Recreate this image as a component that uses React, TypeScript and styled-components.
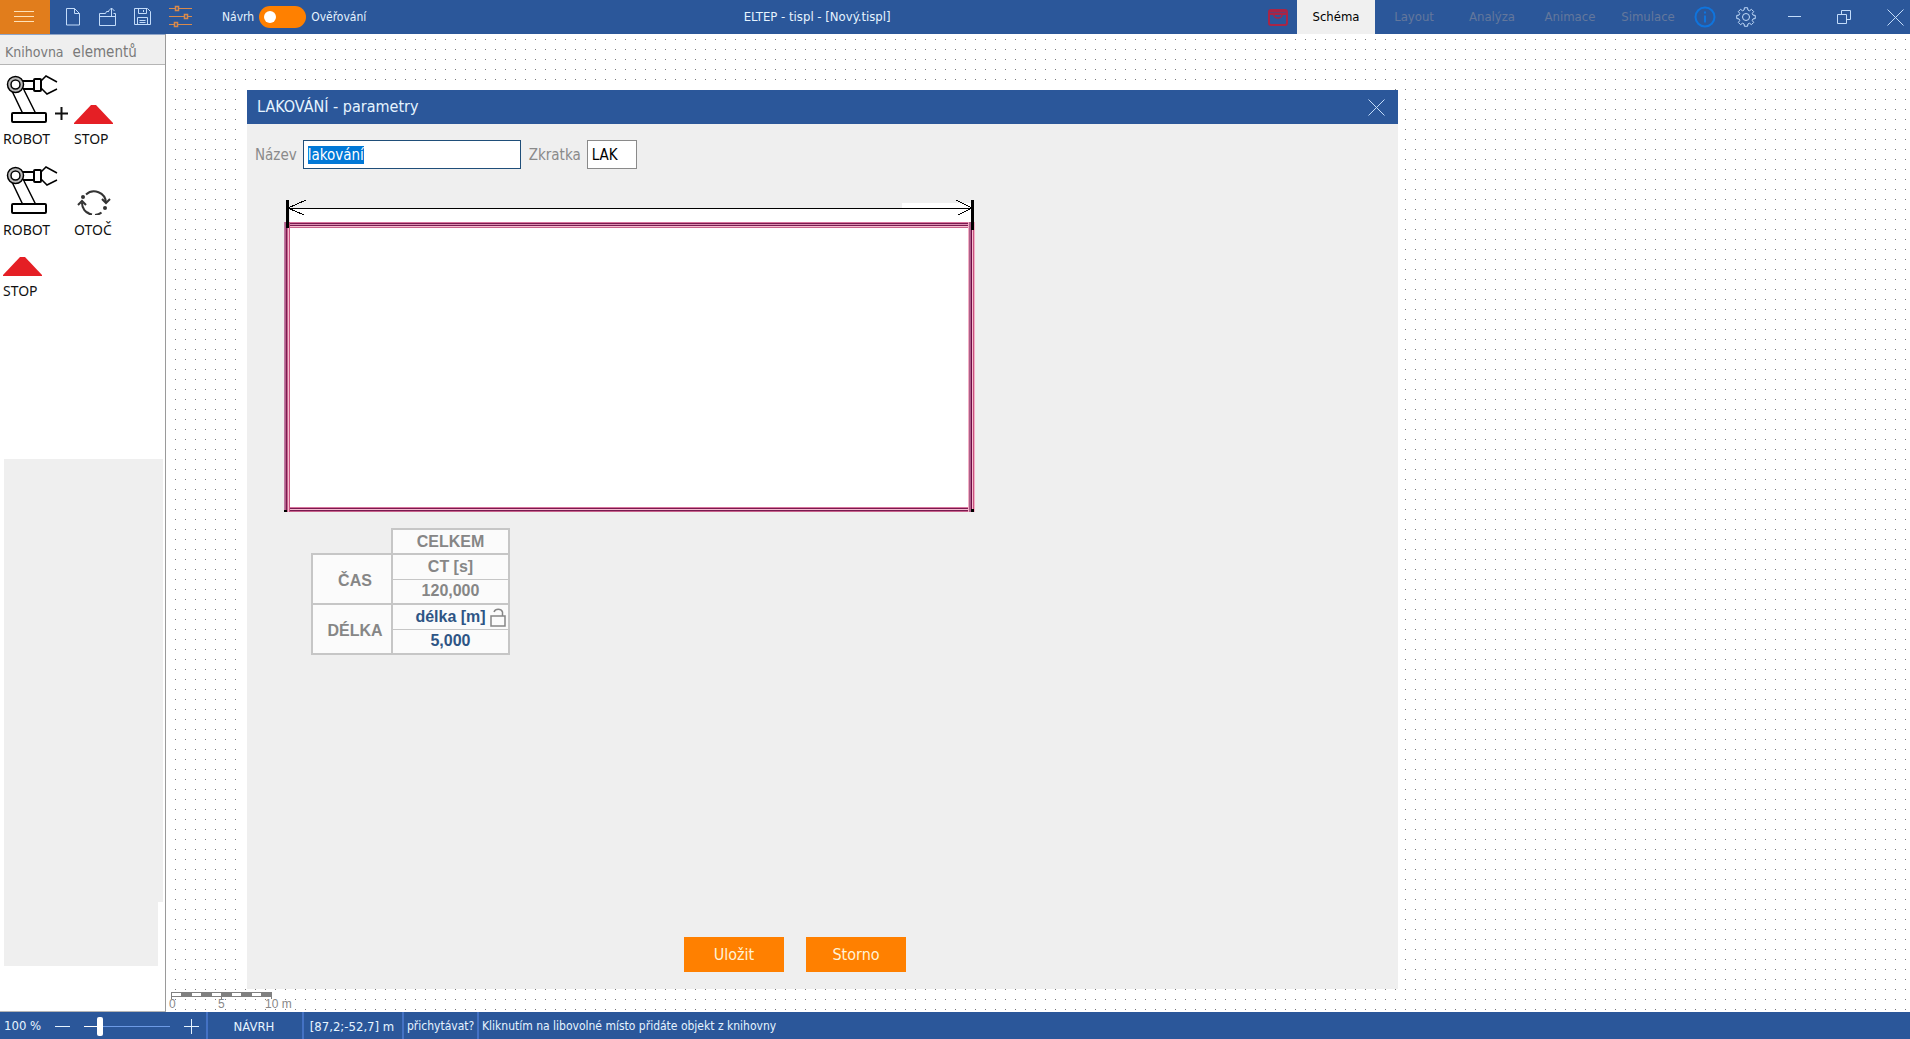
import React, { useEffect, useRef, useState } from 'react';
import styled, { createGlobalStyle, css } from 'styled-components';

const color = {
  bar: '#2b579a',
  barText: '#e6f4ff',
  divider: '#4472c4',
  orange: '#ff8000',
  panel: '#efefef',
  muted: '#8a8a8a',
  tableLine: '#c6c6c6',
};

const uiFont = '"DejaVu Sans Condensed", "DejaVu Sans", sans-serif';
const labelFont = '"Noto Sans", sans-serif';

const GlobalStyle = createGlobalStyle`
  *, *::before, *::after { box-sizing: border-box; }
  body { margin: 0; background: #fff; font: 13px/20px ${uiFont}; overflow: hidden; }
  button { border: 0; padding: 0; background: none; font: inherit; color: inherit; cursor: pointer; }
  svg { display: block; }
`;

const Page = styled.div`
  display: flex;
  flex-direction: column;
  height: 100vh;
`;

/* ---------- title bar ---------- */

const TitleBar = styled.header`
  display: grid;
  grid-template-columns: auto 1fr auto;
  height: 34px;
  flex: none;
  background: ${color.bar};
  color: ${color.barText};
`;

const BarGroup = styled.div`
  display: flex;
  align-items: center;
`;

const MenuButton = styled.button`
  display: grid;
  place-items: center;
  width: 50px;
  height: 34px;
  padding-right: 2px;
  background: #e17d1c;
`;

const IconRow = styled.div<{ $gap: number }>`
  display: flex;
  align-items: center;
  gap: ${(p) => p.$gap}px;
`;

const ToolButtons = styled(IconRow)`
  padding-left: 15px;
`;

const ModeSwitch = styled.label`
  display: flex;
  align-items: center;
  gap: 5px;
  margin-left: 29px;
  font-size: 12px;
`;

const Toggle = styled.input`
  appearance: none;
  display: flex;
  align-items: center;
  width: 47px;
  height: 22px;
  margin: 0;
  padding: 0 5px;
  border-radius: 11px;
  background: ${color.orange};
  &::before {
    content: '';
    width: 12px;
    height: 12px;
    border-radius: 50%;
    background: #fff;
  }
  &:checked { justify-content: flex-end; }
`;

const AppTitle = styled.h1`
  margin: 0;
  font-size: 13px;
  font-weight: normal;
  line-height: 34px;
  text-align: center;
`;

const Tab = styled.button<{ $active?: boolean }>`
  width: 78px;
  height: 34px;
  color: #64779c;
  ${(p) => p.$active && css`
    background: #f0f0f0;
    color: #000;
  `}
`;

const TabList = styled.nav`
  display: flex;
  margin: 0 7px 0 9px;
`;

const WindowControls = styled(IconRow)`
  padding: 0 6px 0 32px;
`;

/* ---------- sidebar ---------- */

const Workspace = styled.div`
  display: flex;
  flex: 1;
  min-height: 0;
`;

const Sidebar = styled.aside`
  display: flex;
  flex-direction: column;
  width: 166px;
  flex: none;
  border-right: 1px solid #9a9a9a;
  border-bottom: 1px solid #b5b5b5;
`;

const SidebarTitle = styled.h2`
  display: flex;
  gap: 9px;
  height: 31px;
  margin: 0;
  padding-left: 5px;
  border-top: 1px solid #8fa5c8;
  border-bottom: 1px solid #b5b5b5;
  background: ${color.panel};
  color: #7a7a7a;
  font-size: 15px;
  font-weight: normal;
  line-height: 34px;
`;

const SidebarTitleLead = styled.span`
  font-size: 14px;
`;

const ElementList = styled.div`
  display: grid;
  grid-template-columns: 52px 19px 1fr;
  row-gap: 17px;
  padding: 10px 0 0 3px;
  color: #111;
  font: 14px/20px ${labelFont};
`;

const ElementButton = styled.button<{ $column?: number }>`
  display: flex;
  flex-direction: column;
  justify-content: flex-end;
  justify-self: start;
  align-items: flex-start;
  gap: 5px;
  grid-column: ${(p) => p.$column ?? 1};
`;

const Plus = styled.span`
  display: grid;
  justify-items: start;
  align-items: center;
  padding-top: 3px;
`;

const Filler = styled.div`
  flex: 1;
  margin: 158px 2px 0 4px;
  background: ${color.panel};
`;

const FillerFoot = styled.div`
  height: 64px;
  margin: 0 7px 45px 4px;
  background: ${color.panel};
`;

/* ---------- canvas and dialog ---------- */

const Canvas = styled.main`
  display: flex;
  flex: 1;
  flex-direction: column;
  min-width: 0;
  padding-top: 56px;
  background: conic-gradient(at 1px 1px, transparent 270deg, #7c7c7c 270deg) 9px 5px / 10px 10px;
`;

const Dialog = styled.section`
  display: flex;
  flex: 1;
  flex-direction: column;
  width: 66%;
  margin-left: 81px;
  background: ${color.panel};
  box-shadow: -3px -3px 0 #fff;
`;

const DialogHeader = styled.header`
  display: flex;
  align-items: center;
  justify-content: space-between;
  height: 34px;
  padding: 0 13px 0 10px;
  background: ${color.bar};
  color: ${color.barText};
`;

const DialogTitle = styled.h2`
  margin: 0;
  font-size: 16px;
  font-weight: normal;
`;

const FormRow = styled.form`
  display: flex;
  align-items: center;
  gap: 8px;
  padding: 16px 8px 0;
  color: ${color.muted};
  font-size: 15px;
`;

const Field = styled.label`
  display: flex;
  align-items: center;
  gap: 6px;
`;

const TextField = styled.input<{ $width: number; $strong?: boolean }>`
  width: ${(p) => p.$width}px;
  height: 29px;
  padding: 0 4px;
  border: 1px solid ${(p) => (p.$strong ? '#1f4e79' : '#8a8a8a')};
  border-radius: 0;
  outline: none;
  background: #fff;
  color: #000;
  font: 15px/20px ${uiFont};
  &::selection { background: #0078d7; color: #fff; }
`;

const Drawing = styled.figure`
  margin: 27px 0 0 33px;
`;

const Table = styled.table`
  margin: 12px 0 0 64px;
  align-self: flex-start;
  border-collapse: collapse;
  color: #868686;
  font: bold 16px/20px "Liberation Sans", Arial, sans-serif;
  text-align: center;
`;

const Cell = styled.td<{ $thin?: boolean; $blue?: boolean }>`
  position: relative;
  width: 117px;
  height: 25px;
  padding: 0;
  border: 2px solid ${color.tableLine};
  background: #fbfbfb;
  color: ${(p) => (p.$blue ? '#2e5585' : 'inherit')};
  ${(p) => p.$thin && css`border-bottom-width: 1px;`}
`;

const ValueCell = styled(Cell)`
  border-top-width: 1px;
`;

const HeadCell = styled(Cell)`
  width: 80px;
  padding: 3px 0 0 6px;
`;

const LockButton = styled.button`
  position: absolute;
  right: 2px;
  top: 2px;
`;

const Actions = styled.footer`
  display: flex;
  gap: 22px;
  margin-top: auto;
  padding: 0 0 17px 437px;
`;

const ActionButton = styled.button`
  width: 100px;
  height: 35px;
  background: ${color.orange};
  color: #fff3d6;
  font-size: 16px;
`;

const ScaleBar = styled.div`
  margin: 2px 0 0 1px;
  height: 21px;
`;

/* ---------- status bar ---------- */

const StatusBar = styled.footer`
  display: flex;
  height: 27px;
  flex: none;
  background: ${color.bar};
  color: ${color.barText};
`;

const Zoom = styled.div`
  display: flex;
  align-items: center;
  gap: 14px;
  width: 206px;
  padding: 1px 0 0 4px;
`;

const ZoomRange = styled.input`
  appearance: none;
  width: 86px;
  height: 20px;
  margin: 0;
  background: linear-gradient(90deg, #fff 16%, #6d9be6 16%) center / 100% 1px no-repeat;
  &::-webkit-slider-thumb {
    appearance: none;
    width: 6px;
    height: 19px;
    border-radius: 2px;
    background: #fff;
  }
`;

const StatusCell = styled.div<{ $width?: number; $small?: boolean }>`
  width: ${(p) => (p.$width ? `${p.$width}px` : 'auto')};
  padding-left: ${(p) => (p.$small ? 3 : 0)}px;
  padding-right: ${(p) => (p.$small ? 0 : 2)}px;
  border-left: 2px solid ${color.divider};
  font-size: ${(p) => (p.$small ? 12 : 13)}px;
  line-height: 29px;
  text-align: ${(p) => (p.$small ? 'left' : 'center')};
  white-space: nowrap;
`;

/* ---------- icons ---------- */

const line = { fill: 'none', stroke: '#c3dcfa', strokeWidth: 1 };

const MenuIcon = () => (
  <svg width="20" height="12" stroke="#ffe2b8">
    <path d="M0 .5h20M0 5.5h20M0 10.5h20" />
  </svg>
);
const NewIcon = () => (
  <svg width="17" height="18" {...line}>
    <path d="M1.500 .5h8l5 5v11.500h-13zM9.500 .5v5h5" />
  </svg>
);
const OpenIcon = () => (
  <svg width="18" height="21" {...line}>
    <path d="M10 4.500h-2.500l-1 2h-6v12h16v-12h-2M.5 9.500h16M12.500 9V1M9.500 4l3-3 3 3" />
  </svg>
);
const SaveIcon = () => (
  <svg width="18" height="18" {...line}>
    <path d="M.5 .5h13l3 3v13h-16zM4.500 .5v5h8v-5M9.500 2v2M3.500 16.500v-7h10v7M5.500 12.500h6M5.500 14.500h6" />
  </svg>
);
const SlidersIcon = () => (
  <svg width="24" height="24" fill="none" stroke="#d98a4c">
    <path d="M0 3.500h6M10 3.500h13M0 11.500h15M19 11.500h4M0 19.500h5M9 19.500h14" />
    <path d="M6.500 1.500h3v4h-3zM15.500 9.500h3v4h-3zM5.500 17.500h3v4h-3z" strokeWidth="1.500" />
  </svg>
);
const CalendarIcon = () => (
  <svg width="20" height="17" fill="none" stroke="#a82546" strokeWidth="2">
    <rect x="1" y="1" width="18" height="15" rx="2" />
    <path d="M1 2.500h18M1 5h18" />
    <path d="M6 6a4 3 0 0 0 8 0" strokeWidth="1.500" />
  </svg>
);
const InfoIcon = () => (
  <svg width="22" height="22" fill="none" stroke="#0f74dd" strokeWidth="2">
    <circle cx="11" cy="11" r="9.500" />
    <path d="M11 9.500v7M11 5.500v2" />
  </svg>
);
const gearPath = (() => {
  const teeth = 8;
  const points: string[] = [];
  for (let i = 0; i < teeth; i += 1) {
    const mid = (i * 2 * Math.PI) / teeth;
    [[-0.27, 7.2], [-0.17, 9.4], [0.17, 9.4], [0.27, 7.2]].forEach(([a, r]) => {
      points.push(`${(10 + r * Math.sin(mid + a)).toFixed(2)} ${(10 - r * Math.cos(mid + a)).toFixed(2)}`);
    });
  }
  return `M${points.join('L')}Z`;
})();
const GearIcon = () => (
  <svg width="20" height="20" {...line} strokeLinejoin="round">
    <path d={gearPath} />
    <circle cx="10" cy="10" r="3.500" />
  </svg>
);
const MinimizeIcon = () => (
  <svg width="14" height="14" {...line}><path d="M0 6.500h13" /></svg>
);
const RestoreIcon = () => (
  <svg width="15" height="15" {...line}>
    <path d="M.5 4.500h9v9h-9zM4.500 4.500v-4h9v9h-4" />
  </svg>
);
const CloseIcon = () => (
  <svg width="17" height="17" {...line}><path d="M.5 .5l16 16M16.500 .5l-16 16" /></svg>
);
const RobotIcon = () => (
  <svg width="56" height="49" fill="none" stroke="#000" strokeWidth="2">
    <path d="M9 16l11 23M21 15l12 24" strokeWidth="1.500" />
    <rect x="9" y="38" width="34" height="9" rx="1" fill="#fff" />
    <circle cx="12.500" cy="9.500" r="6.500" stroke="#bdbdbd" strokeWidth="3" />
    <circle cx="12.500" cy="9.500" r="8" strokeWidth="1.500" />
    <circle cx="12.500" cy="9.500" r="4.500" strokeWidth="1.500" />
    <path d="M20 6h10M20 14h10" />
    <rect x="31" y="4" width="7" height="12" rx="1" />
    <path d="M38 6l5-5 11 6M38 13l6 6 10-5" strokeWidth="1.500" />
  </svg>
);
const StopIcon = () => (
  <svg width="39" height="19"><path d="M17 0h5l17 18v1h-39v-1z" fill="#e51f25" /></svg>
);
const RotateIcon = () => (
  <svg width="40" height="26" fill="none" stroke="#333" strokeWidth="2">
    <path d="M12 5.500a12 12 0 0 1 20 8M27.500 23.500A12 12 0 0 1 21 26" />
    <path d="M17 25.500a12 12 0 0 1-9-12M13 23a12 12 0 0 0 5 2.500" />
    <path d="M28 10l4 4 4-4M4 16l4-4 4 4" />
    <circle cx="9" cy="8" r="2" fill="#333" stroke="none" />
    <circle cx="31" cy="19" r="2" fill="#333" stroke="none" />
  </svg>
);
const PlusIcon = () => (
  <svg width="13" height="13" stroke="#111" strokeWidth="2"><path d="M6.500 0v13M0 6.500h13" /></svg>
);
const LockIcon = () => (
  <svg width="16" height="20" fill="none" stroke="#868686" strokeWidth="1.500">
    <path d="M1 9h14v10h-14zM4 5a4.500 4 0 0 1 8.500 0v4" />
  </svg>
);
const ZoomIcon = ({ plus }: { plus?: boolean }) => (
  <svg width="15" height="15" stroke="#e6f4ff"><path d={plus ? 'M0 7.500h15M7.500 0v15' : 'M0 7.500h15'} /></svg>
);

const horizontalLines: [number, string][] = [
  [26, '#d9749d'], [27, '#7a1a50'], [28, '#dc93b2'], [29, '#7a1a50'], [30, '#f6bccf'], [31, '#c8638c'],
  [311, '#d9749d'], [312, '#7a1a50'], [313, '#f6bccf'], [314, '#7a1a50'], [315, '#c8638c'],
];
const verticalLines: [number, string][] = [
  [4, '#c079a0'], [5, '#b0608a'], [6, '#7a1a50'], [7, '#c8638c'], [8, '#f6bccf'], [9, '#c8527f'],
  [688, '#f3b0c6'], [689, '#b0608a'], [690, '#b0608a'], [691, '#6d0a44'], [692, '#f6bccf'], [693, '#c8527f'], [694, '#f3b0c6'],
];

const BoothDrawing = () => (
  <svg width="700" height="320" shapeRendering="crispEdges">
    <rect x="10" y="13" width="682" height="301" fill="#fff" />
    <rect x="622" y="7" width="70" height="6" fill="#fff" />
    {horizontalLines.map(([y, c]) => <rect key={y} x="5" y={y} width="690" height="1" fill={c} />)}
    {verticalLines.map(([x, c]) => <rect key={x} x={x} y="26" width="1" height="290" fill={c} />)}
    <path d="M8 12.500h683" stroke="#000" />
    <path d="M26 4L8 12l16 7M676 4l16 8-14 7" fill="none" stroke="#000" />
    <path d="M6 4h3v28h-3zM691 4h3v30h-3zM4 314h3v2h-3zM691 313h3v3h-3z" fill="#000" />
  </svg>
);

const ScaleDrawing = () => (
  <svg width="140" height="21">
    <path d="M4 1h101v5h-101z" fill="#808080" />
    {[5, 25, 45, 65, 85].map((x) => <rect key={x} x={x} y="2" width="9" height="3" fill="#fff" />)}
    <path d="M4.500 1v7M54.500 1v7M104.500 1v7" stroke="#808080" />
    <g fill="#888" fontSize="12" fontFamily="Liberation Sans, Arial, sans-serif">
      <text x="2" y="17">0</text>
      <text x="51" y="17">5</text>
      <text x="98" y="17">10 m</text>
    </g>
  </svg>
);

const tabs = ['Schéma', 'Layout', 'Analýza', 'Animace', 'Simulace'];

export default function App() {
  const nameRef = useRef<HTMLInputElement>(null);
  const [tab, setTab] = useState('Schéma');

  useEffect(() => {
    nameRef.current?.focus();
    nameRef.current?.select();
  }, []);

  return (
    <Page>
      <GlobalStyle />
      <TitleBar>
        <BarGroup>
          <MenuButton aria-label="Menu"><MenuIcon /></MenuButton>
          <ToolButtons $gap={17}>
            <button aria-label="Nový"><NewIcon /></button>
            <button aria-label="Otevřít"><OpenIcon /></button>
            <button aria-label="Uložit soubor"><SaveIcon /></button>
            <button aria-label="Nastavení"><SlidersIcon /></button>
          </ToolButtons>
          <ModeSwitch>
            <span>Návrh</span>
            <Toggle type="checkbox" />
            <span>Ověřování</span>
          </ModeSwitch>
        </BarGroup>
        <AppTitle>ELTEP - tispl - [Nový.tispl]</AppTitle>
        <BarGroup>
          <button aria-label="Kalendář"><CalendarIcon /></button>
          <TabList>
            {tabs.map((name) => (
              <Tab key={name} $active={name === tab} onClick={() => setTab(name)}>{name}</Tab>
            ))}
          </TabList>
          <IconRow $gap={20}>
            <button aria-label="Informace"><InfoIcon /></button>
            <button aria-label="Předvolby"><GearIcon /></button>
          </IconRow>
          <WindowControls $gap={35}>
            <button aria-label="Minimalizovat"><MinimizeIcon /></button>
            <button aria-label="Obnovit"><RestoreIcon /></button>
            <button aria-label="Zavřít"><CloseIcon /></button>
          </WindowControls>
        </BarGroup>
      </TitleBar>

      <Workspace>
        <Sidebar>
          <SidebarTitle><SidebarTitleLead>Knihovna</SidebarTitleLead> elementů</SidebarTitle>
          <ElementList>
            <ElementButton><RobotIcon />ROBOT</ElementButton>
            <Plus><PlusIcon /></Plus>
            <ElementButton $column={3}><StopIcon />STOP</ElementButton>
            <ElementButton><RobotIcon />ROBOT</ElementButton>
            <ElementButton $column={3}><RotateIcon />OTOČ</ElementButton>
            <ElementButton><StopIcon />STOP</ElementButton>
          </ElementList>
          <Filler />
          <FillerFoot />
        </Sidebar>

        <Canvas>
          <Dialog role="dialog" aria-labelledby="dialog-title">
            <DialogHeader>
              <DialogTitle id="dialog-title">LAKOVÁNÍ - parametry</DialogTitle>
              <button aria-label="Zavřít okno"><CloseIcon /></button>
            </DialogHeader>
            <FormRow>
              <Field>
                Název
                <TextField ref={nameRef} $width={218} $strong defaultValue="lakování" spellCheck={false} />
              </Field>
              <Field>
                Zkratka
                <TextField $width={50} defaultValue="LAK" spellCheck={false} />
              </Field>
            </FormRow>
            <Drawing><BoothDrawing /></Drawing>
            <Table>
              <tbody>
                <tr>
                  <td />
                  <Cell as="th">CELKEM</Cell>
                </tr>
                <tr>
                  <HeadCell as="th" rowSpan={2}>ČAS</HeadCell>
                  <Cell $thin>CT [s]</Cell>
                </tr>
                <tr><ValueCell>120,000</ValueCell></tr>
                <tr>
                  <HeadCell as="th" rowSpan={2}>DÉLKA</HeadCell>
                  <Cell $thin $blue>
                    délka [m]
                    <LockButton aria-label="Odemknout délku"><LockIcon /></LockButton>
                  </Cell>
                </tr>
                <tr><ValueCell $blue>5,000</ValueCell></tr>
              </tbody>
            </Table>
            <Actions>
              <ActionButton>Uložit</ActionButton>
              <ActionButton>Storno</ActionButton>
            </Actions>
          </Dialog>
          <ScaleBar><ScaleDrawing /></ScaleBar>
        </Canvas>
      </Workspace>

      <StatusBar>
        <Zoom>
          <label htmlFor="zoom">100 %</label>
          <button aria-label="Oddálit"><ZoomIcon /></button>
          <ZoomRange id="zoom" type="range" min={0} max={100} defaultValue={16} />
          <button aria-label="Přiblížit"><ZoomIcon plus /></button>
        </Zoom>
        <StatusCell $width={96}>NÁVRH</StatusCell>
        <StatusCell $width={100}>[87,2;-52,7] m</StatusCell>
        <StatusCell $width={75} $small>přichytávat?</StatusCell>
        <StatusCell $small>Kliknutím na libovolné místo přidáte objekt z knihovny</StatusCell>
      </StatusBar>
    </Page>
  );
}
